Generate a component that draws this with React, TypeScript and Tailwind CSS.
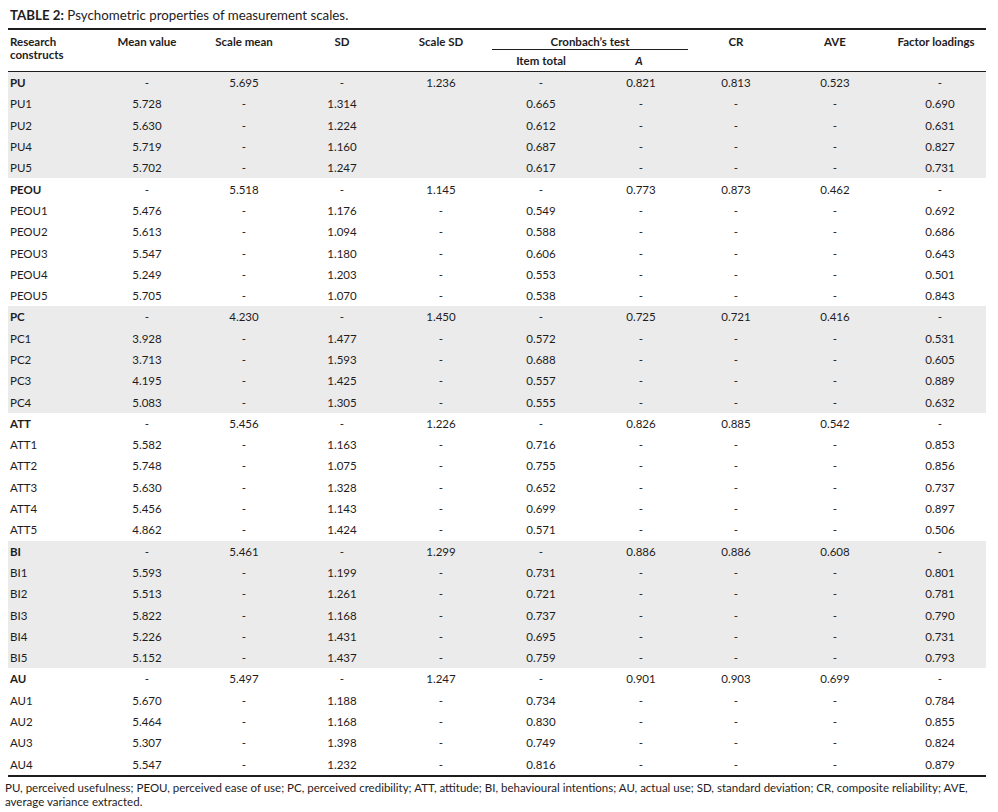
import React from "react";

type Row = { label: string; bold?: boolean; cells: string[] };
type Group = { shaded: boolean; rows: Row[] };

const d = "-";

const mk = (label: string, v: string[], bold = false): Row => ({ label, bold, cells: v });

const groups: Group[] = [
  {
    shaded: true,
    rows: [
      mk("PU", [d, "5.695", d, "1.236", d, "0.821", "0.813", "0.523", d], true),
      mk("PU1", ["5.728", d, "1.314", "", "0.665", d, d, d, "0.690"]),
      mk("PU2", ["5.630", d, "1.224", "", "0.612", d, d, d, "0.631"]),
      mk("PU4", ["5.719", d, "1.160", "", "0.687", d, d, d, "0.827"]),
      mk("PU5", ["5.702", d, "1.247", "", "0.617", d, d, d, "0.731"]),
    ],
  },
  {
    shaded: false,
    rows: [
      mk("PEOU", [d, "5.518", d, "1.145", d, "0.773", "0.873", "0.462", d], true),
      mk("PEOU1", ["5.476", d, "1.176", d, "0.549", d, d, d, "0.692"]),
      mk("PEOU2", ["5.613", d, "1.094", d, "0.588", d, d, d, "0.686"]),
      mk("PEOU3", ["5.547", d, "1.180", d, "0.606", d, d, d, "0.643"]),
      mk("PEOU4", ["5.249", d, "1.203", d, "0.553", d, d, d, "0.501"]),
      mk("PEOU5", ["5.705", d, "1.070", d, "0.538", d, d, d, "0.843"]),
    ],
  },
  {
    shaded: true,
    rows: [
      mk("PC", [d, "4.230", d, "1.450", d, "0.725", "0.721", "0.416", d], true),
      mk("PC1", ["3.928", d, "1.477", d, "0.572", d, d, d, "0.531"]),
      mk("PC2", ["3.713", d, "1.593", d, "0.688", d, d, d, "0.605"]),
      mk("PC3", ["4.195", d, "1.425", d, "0.557", d, d, d, "0.889"]),
      mk("PC4", ["5.083", d, "1.305", d, "0.555", d, d, d, "0.632"]),
    ],
  },
  {
    shaded: false,
    rows: [
      mk("ATT", [d, "5.456", d, "1.226", d, "0.826", "0.885", "0.542", d], true),
      mk("ATT1", ["5.582", d, "1.163", d, "0.716", d, d, d, "0.853"]),
      mk("ATT2", ["5.748", d, "1.075", d, "0.755", d, d, d, "0.856"]),
      mk("ATT3", ["5.630", d, "1.328", d, "0.652", d, d, d, "0.737"]),
      mk("ATT4", ["5.456", d, "1.143", d, "0.699", d, d, d, "0.897"]),
      mk("ATT5", ["4.862", d, "1.424", d, "0.571", d, d, d, "0.506"]),
    ],
  },
  {
    shaded: true,
    rows: [
      mk("BI", [d, "5.461", d, "1.299", d, "0.886", "0.886", "0.608", d], true),
      mk("BI1", ["5.593", d, "1.199", d, "0.731", d, d, d, "0.801"]),
      mk("BI2", ["5.513", d, "1.261", d, "0.721", d, d, d, "0.781"]),
      mk("BI3", ["5.822", d, "1.168", d, "0.737", d, d, d, "0.790"]),
      mk("BI4", ["5.226", d, "1.431", d, "0.695", d, d, d, "0.731"]),
      mk("BI5", ["5.152", d, "1.437", d, "0.759", d, d, d, "0.793"]),
    ],
  },
  {
    shaded: false,
    rows: [
      mk("AU", [d, "5.497", d, "1.247", d, "0.901", "0.903", "0.699", d], true),
      mk("AU1", ["5.670", d, "1.188", d, "0.734", d, d, d, "0.784"]),
      mk("AU2", ["5.464", d, "1.168", d, "0.830", d, d, d, "0.855"]),
      mk("AU3", ["5.307", d, "1.398", d, "0.749", d, d, d, "0.824"]),
      mk("AU4", ["5.547", d, "1.232", d, "0.816", d, d, d, "0.879"]),
    ],
  },
];

const cols =
  "grid grid-cols-[92px_94px_100px_96px_102px_98px_98px_96px_102px_100px]";

export default function App() {
  return (
    <div
      className="w-[998px] h-[812px] bg-white text-[#1f1c1d] text-[11.5px] leading-[13px]"
      style={{ fontFamily: "Lato, 'Open Sans', sans-serif" }}
    >
      <div className="pl-[10px] pt-[8px] h-[28px] text-[13.3px] leading-[15px]">
        <span className="font-bold">TABLE 2:</span> Psychometric properties of measurement scales.
      </div>
      <div className="ml-[8px] w-[978px]">
        <div className="h-[2px] bg-[#1f1c1d]" />
        {/* header */}
        <div className={`${cols} font-bold h-[42px] border-b border-[#1f1c1d]`}>
          <div className="pl-[2px] pt-[5px]">
            Research
            <br />
            constructs
          </div>
          <div className="text-center pt-[5px]">Mean value</div>
          <div className="text-center pt-[5px]">Scale mean</div>
          <div className="text-center pt-[5px]">SD</div>
          <div className="text-center pt-[5px]">Scale SD</div>
          <div className="col-span-2 flex flex-col">
            <div className="h-[20px] text-center pt-[5px] border-b border-[#1f1c1d]">
              Cronbach&rsquo;s test
            </div>
            <div className="grid grid-cols-2 pt-[4px]">
              <div className="text-center">Item total</div>
              <div className="text-center italic">A</div>
            </div>
          </div>
          <div className="text-center pt-[5px]">CR</div>
          <div className="text-center pt-[5px]">AVE</div>
          <div className="text-center pt-[5px]">Factor loadings</div>
        </div>
        {/* body */}
        {groups.map((g, gi) => (
          <div key={gi} className={g.shaded ? "bg-[#ebebeb]" : ""}>
            {g.rows.map((r) => (
              <div key={r.label} className={`${cols} h-[21.3px] items-center`}>
                <div className={`pl-[2px] ${r.bold ? "font-bold" : ""}`}>{r.label}</div>
                {r.cells.map((c, ci) => (
                  <div
                    key={ci}
                    className={`text-center ${ci === 8 ? "pl-[8px]" : ""} ${ci === 5 ? "pl-[4px]" : ""}`}
                  >
                    {c}
                  </div>
                ))}
              </div>
            ))}
          </div>
        ))}
        <div className="h-[2px] bg-[#1f1c1d]" />
        <div className="pt-[4px] text-[11.5px] leading-[14px] -ml-[3px]">
          PU, perceived usefulness; PEOU, perceived ease of use; PC, perceived credibility; ATT, attitude; BI,
          behavioural intentions; AU, actual use; SD, standard deviation; CR, composite reliability; AVE,
          average variance extracted.
        </div>
      </div>
    </div>
  );
}
